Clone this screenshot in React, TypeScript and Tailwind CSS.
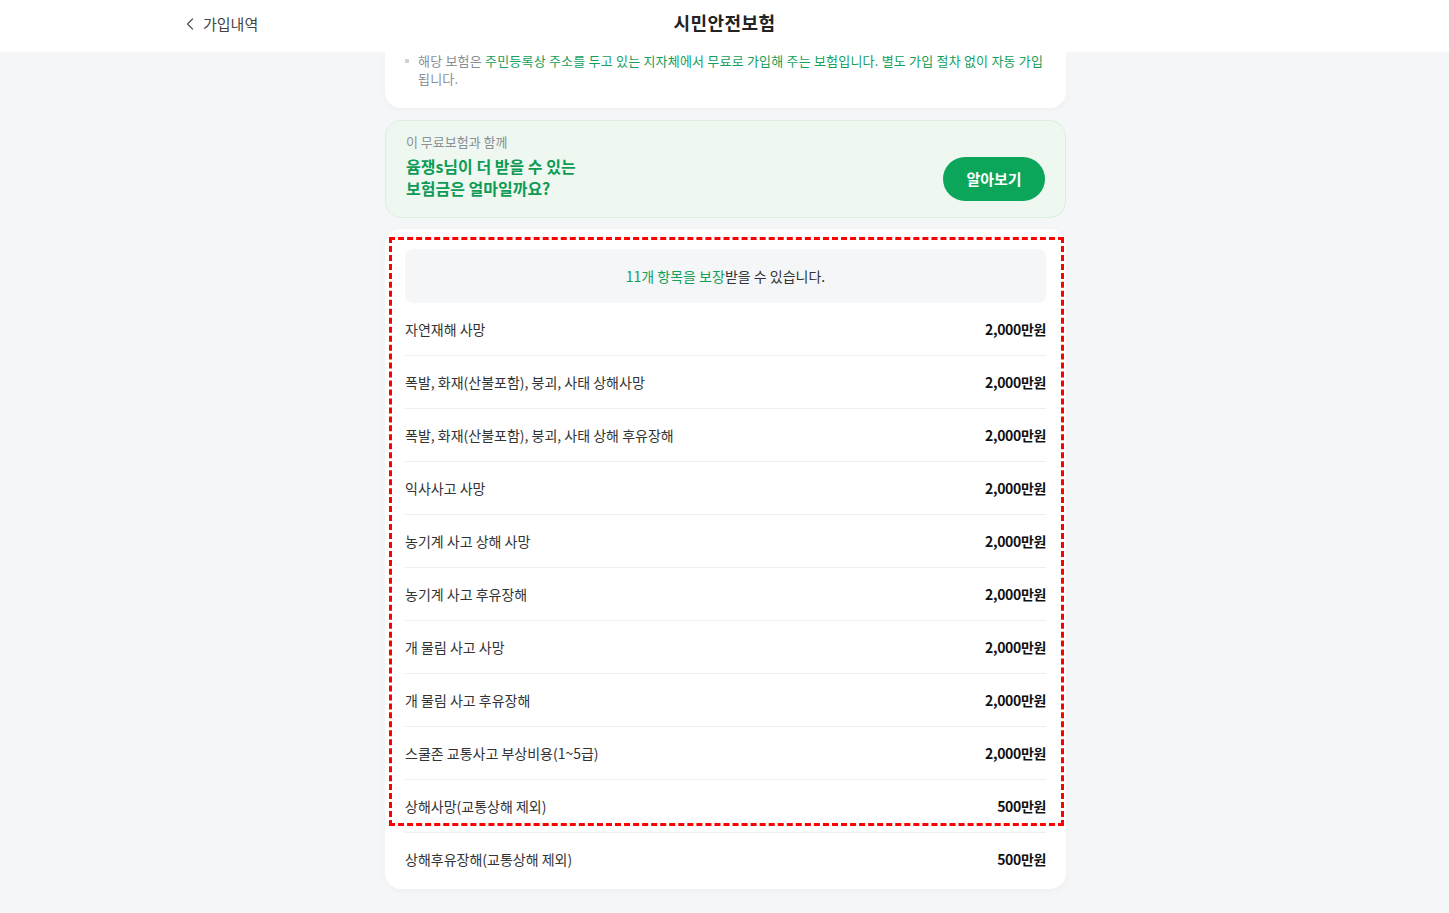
import { ChevronLeft } from "lucide-react"
import type React from "react"

type Coverage = {
  name: string
  amount: string
}

const coverages: Coverage[] = [
  { name: "자연재해 사망", amount: "2,000" },
  { name: "폭발, 화재(산불포함), 붕괴, 사태 상해사망", amount: "2,000" },
  { name: "폭발, 화재(산불포함), 붕괴, 사태 상해 후유장해", amount: "2,000" },
  { name: "익사사고 사망", amount: "2,000" },
  { name: "농기계 사고 상해 사망", amount: "2,000" },
  { name: "농기계 사고 후유장해", amount: "2,000" },
  { name: "개 물림 사고 사망", amount: "2,000" },
  { name: "개 물림 사고 후유장해", amount: "2,000" },
  { name: "스쿨존 교통사고 부상비용(1~5급)", amount: "2,000" },
  { name: "상해사망(교통상해 제외)", amount: "500" },
  { name: "상해후유장해(교통상해 제외)", amount: "500" },
]

export default function App(): React.ReactElement {
  return (
    <div className="min-h-screen bg-[#f5f6f8] font-['Noto_Sans_CJK_KR','Noto_Sans',sans-serif] text-[#222]">
      {/* Header */}
      <header className="relative flex h-[52px] items-center justify-center bg-white pb-[7px]">
        <button className="absolute left-[180px] top-[13px] flex items-center gap-[3px] text-[15px] text-[#444]">
          <ChevronLeft className="h-5 w-5 text-[#555]" strokeWidth={1.5} />
          <span>가입내역</span>
        </button>
        <h1 className="text-[18px] font-bold tracking-wide text-[#222]">시민안전보험</h1>
      </header>

      <main className="mx-auto flex w-[681px] translate-x-px flex-col pb-6">
        {/* Notice card (scrolled under header) */}
        <section className="rounded-b-2xl bg-white px-5 pb-5 shadow-[0_2px_6px_rgba(0,0,0,0.03)]">
          <div className="flex gap-[9px] text-[13px] leading-[18px]">
            <span className="mt-[7px] h-[4px] w-[4px] shrink-0 bg-[#cfd3d8]" />
            <p className="tracking-[0.2px] text-[#8a8f96]">
              해당 보험은 <span className="text-[#12a05a]">주민등록상 주소를 두고 있는 지자체에서 무료로 가입해 주는 보험입니다. 별도 가입 절차 없이 자동 가입</span>됩니다.
            </p>
          </div>
        </section>

        {/* Promo card */}
        <section className="mt-3 flex items-end justify-between rounded-2xl border border-[#dcefe2] bg-[#eef8f1] pb-4 pl-5 pr-5 pt-3">
          <div className="flex flex-col pb-[2px]">
            <span className="text-[13px] leading-[18px] text-[#8a8f96]">이 무료보험과 함께</span>
            <p className="mt-[4px] text-[16px] font-bold leading-[22px] text-[#0e9b55]">
              윰쟁s님이 더 받을 수 있는
              <br />
              보험금은 얼마일까요?
            </p>
          </div>
          <button className="h-[44px] w-[102px] rounded-full bg-[#0ca65a] text-[15px] font-bold text-white">
            알아보기
          </button>
        </section>

        {/* Coverage list card */}
        <section className="relative mt-[11px] rounded-2xl bg-white px-5 pb-[3px] pt-5 shadow-[0_2px_6px_rgba(0,0,0,0.03)]">
          <div className="flex h-[54px] items-center justify-center rounded-lg bg-[#f5f6f8] text-[14px]">
            <span className="text-[#12a05a]">11개 항목을 보장</span>
            <span className="text-[#333]">받을 수 있습니다.</span>
          </div>
          <ul>
            {coverages.map((item, i) => (
              <li
                key={item.name}
                className={
                  i === coverages.length - 1
                    ? "flex h-[53px] items-center justify-between"
                    : "flex h-[53px] items-center justify-between border-b border-[#eceef0]"
                }
              >
                <span className="text-[14px] text-[#333]">{item.name}</span>
                <span className="text-[14px] font-bold tracking-tight text-[#111]">
                  {item.amount}만원
                </span>
              </li>
            ))}
          </ul>

          {/* annotation overlay */}
          <div className="pointer-events-none absolute left-[4px] top-[8px] h-[589px] w-[675px] border-[3px] border-dashed border-[#ff0000]" />
        </section>
      </main>
    </div>
  )
}
